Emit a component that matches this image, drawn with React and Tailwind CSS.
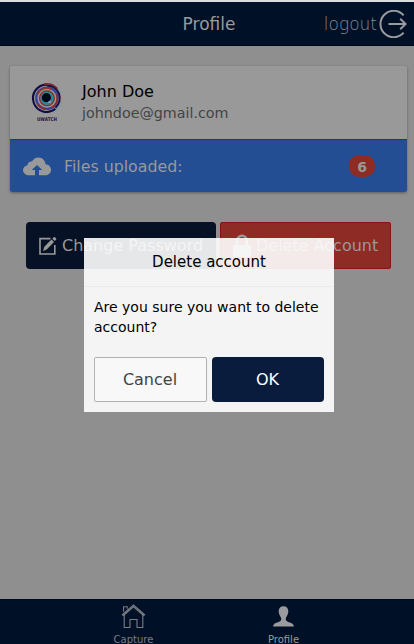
import React from "react";

function LogoutIcon() {
  return (
    <svg className="block h-7 w-7" viewBox="0 0 28 28" fill="none" stroke="#999b9e" strokeWidth="2">
      <path d="M24.6 5.3A13.2 13.2 0 1 0 24.6 22.7" />
      <path d="M9.5 14H26.5M21.2 8.8L26.6 14L21.2 19.2" />
    </svg>
  );
}

function Avatar() {
  return (
    <svg className="block h-[42px] w-[34px] shrink-0" viewBox="0 0 34 42" fill="none">
      <circle cx="17" cy="17.5" r="14.8" stroke="#7f98a6" strokeWidth="1.3" strokeDasharray="17 5 20 4" />
      <g transform="translate(-.9 -.6) scale(1.05)">
        <path d="M17 4A13 13 0 1 0 25 27" stroke="#160a3c" strokeWidth="2" />
        <path d="M14 3.5A13.5 13.5 0 0 1 27 8" stroke="#8c2a24" strokeWidth="1.6" />
        <path d="M17 5A12 12 0 0 1 25 26" stroke="#1e1040" strokeWidth="2.2" />
        <circle cx="17" cy="17" r="10.2" stroke="#344693" strokeWidth="2.2" />
        <path d="M8 13A9.5 9.5 0 0 1 21 8.5" stroke="#9a3325" strokeWidth="1.5" />
        <path d="M26 13A9.5 9.5 0 0 1 21 26M8 22.5A9.5 9.5 0 0 0 15 27" stroke="#922a24" strokeWidth="1.5" />
        <circle cx="17" cy="17" r="8.2" stroke="#8696a5" strokeWidth="0.8" />
        <circle cx="17" cy="17" r="6.9" stroke="#8d2d24" strokeWidth="1.5" />
        <circle cx="17" cy="17" r="5.1" stroke="#178a9b" strokeWidth="2" />
        <circle cx="16.5" cy="16.5" r="4.4" fill="#02061a" />
        <circle cx="19.5" cy="20.5" r="1.2" fill="#86a6ad" />
      </g>
      <text x="17" y="40" textAnchor="middle" textLength="20" lengthAdjust="spacingAndGlyphs" fontFamily="DejaVu Sans, sans-serif" fontSize="5" fontWeight="bold" fill="#2b1038">UWATCH</text>
    </svg>
  );
}

function CloudUpload() {
  return (
    <svg className="block h-[19px] w-7 shrink-0" viewBox="0 0 28 19" fill="#999">
      <path fillRule="evenodd" d="M6.2 18.3H12V13H8.7L14 8L19.3 13H16V18.3H22.2C25.7 18.3 28 15.9 28 12.8C28 9.8 25.6 7.4 22.6 7.3C22 3.2 19.3.4 15.5.4C12.5.4 10.3 2 9 4.5C6.4 4.3 4.7 5.8 4.4 8.2C1.8 8.8 0 10.8 0 13.3C0 16.2 2.8 18.3 6.2 18.3Z" />
    </svg>
  );
}

function EditIcon() {
  return (
    <svg className="block h-5 w-5 shrink-0" viewBox="0 0 20 20">
      <path d="M12.5 2.6H2V18H16.8V9" fill="none" stroke="#999" strokeWidth="1.6" />
      <path d="M5 15L6.3 10.7L13.5 3.5L16 6L8.7 13.5Z" fill="#999" />
      <path d="M14.3 2.7L16 1C16.6.5 18.9 2.8 18.3 3.5L16.7 5.1Z" fill="#999" />
    </svg>
  );
}

function LockIcon() {
  return (
    <svg className="block h-6 w-[18px] shrink-0" viewBox="0 0 18 24">
      <path d="M4 12V7A5 5.3 0 0 1 14 7V12" fill="none" stroke="#999" strokeWidth="2.5" />
      <rect y="11" width="18" height="12" rx="1" fill="#999" />
    </svg>
  );
}

function HomeIcon() {
  return (
    <svg className="block h-[25px] w-[25px] shrink-0" viewBox="0 0 25 25" fill="none" stroke="#777c84" strokeWidth="1.1">
      <path d="M1 11L12.5 1L24 11M1.8 12L12.5 2.8L23.2 12" />
      <path d="M2.6 7.8V2.8H6.2V4.8M3.2 11V23.5H9V15.5H16V23.5H21.8V11" />
    </svg>
  );
}

function PersonIcon() {
  return (
    <svg className="block h-[21px] w-[21px] shrink-0" viewBox="0 0 21 21" fill="#999b9e">
      <path d="M10.5.2C7.2.2 5.7 2.2 5.7 5.3C5.7 7 6.2 8.2 6.7 9.2C7.1 10.1 8 11.2 8.2 12.2V13.5C8.2 16.7.3 15.8.1 20.5H20.9C20.7 15.8 12.8 16.7 12.8 13.5V12.2C13 11.2 13.9 10.1 14.3 9.2C14.8 8.2 15.3 7 15.3 5.3C15.3 2.2 13.8.2 10.5.2Z" />
    </svg>
  );
}

function DeleteDialog() {
  return (
    <section role="dialog" className="absolute left-[84px] top-[238px] h-[174px] w-[250px] bg-white/90 text-black">
      <h2 className="h-[49px] border-b border-[#eaebed] text-center text-[15px] leading-[48px]">Delete account</h2>
      <p className="h-[70px] px-2.5 pt-2.5 text-sm leading-5">Are you sure you want to delete account?</p>
      <div className="flex gap-[5px] px-2.5">
        <button className="h-[45px] w-[113px] rounded-[2px] border border-[#b2b2b2] bg-[#f8f8f8] pr-px text-[#444]">Cancel</button>
        <button className="h-[45px] w-28 rounded-[4px] bg-[#0a1c3e] pr-px text-white">OK</button>
      </div>
    </section>
  );
}

export default function App() {
  return (
    <div className="relative flex h-[644px] w-[414px] flex-col overflow-hidden bg-[#8f8f8f] font-['DejaVu_Sans',sans-serif] text-base">
      <header className="grid h-[46px] shrink-0 grid-cols-[1fr_auto_1fr] items-center border-b border-t-2 border-b-[#000914] border-t-[#d9dddd] bg-[#001127] text-[17px] text-[#999b9e]">
        <span />
        <h1 className="ml-1 pt-0.5">Profile</h1>
        <button className="flex items-center justify-self-end pr-[7px] font-extralight text-[#85898f]">
          <span className="mr-0.5 pt-0.5">logout</span>
          <LogoutIcon />
        </button>
      </header>

      <main className="grow px-2.5 pt-5">
        <div className="mr-[-3px] h-[126px] overflow-hidden rounded-[2px] bg-[#999] shadow-[0_1px_3px_rgba(0,0,0,0.35)]">
          <div className="flex h-[73px] pl-5 pt-[15px]">
            <Avatar />
            <div className="ml-[18px]">
              <p className="h-[21px] leading-[21px] text-black">John Doe</p>
              <p className="text-[14.3px] leading-[22px] text-[#444]">johndoe@gmail.com</p>
            </div>
          </div>
          <div className="flex h-[53px] items-center border-t border-[#0b3b8f] bg-[#234e94] pl-[13px] pr-8 text-[#999]">
            <CloudUpload />
            <span className="ml-[13px] grow pt-0.5 text-[15.8px]">Files uploaded:</span>
            <span className="flex h-[22px] w-[26px] items-center justify-center rounded-[10px] bg-[#8f2b25] pt-px text-sm font-bold">6</span>
          </div>
        </div>
        <div className="ml-4 mt-[30px] flex gap-1 whitespace-nowrap text-[#999]">
          <button className="flex h-[47px] w-[190px] items-center rounded-[4px] bg-[#061125] pl-3">
            <EditIcon />
            <span className="ml-1">Change Password</span>
          </button>
          <button className="flex h-[47px] w-[171px] items-center rounded-[2px] border border-[#8b130d] bg-[#8f2b25] pl-3">
            <LockIcon />
            <span className="ml-[5px]">Delete Account</span>
          </button>
        </div>
      </main>

      <footer className="flex h-[45px] shrink-0 border-t border-[#000b19] bg-[#001127] pl-[58.5px] text-[10px]">
        <div className="flex w-[150px] flex-col items-center pt-1 text-[#777c84]">
          <HomeIcon />
          <span className="mt-[5px] leading-3">Capture</span>
        </div>
        <div className="flex w-[150px] flex-col items-center pt-1.5 text-[#999b9e]">
          <PersonIcon />
          <span className="mt-[7px] leading-3">Profile</span>
        </div>
      </footer>
      <DeleteDialog />
    </div>
  );
}
